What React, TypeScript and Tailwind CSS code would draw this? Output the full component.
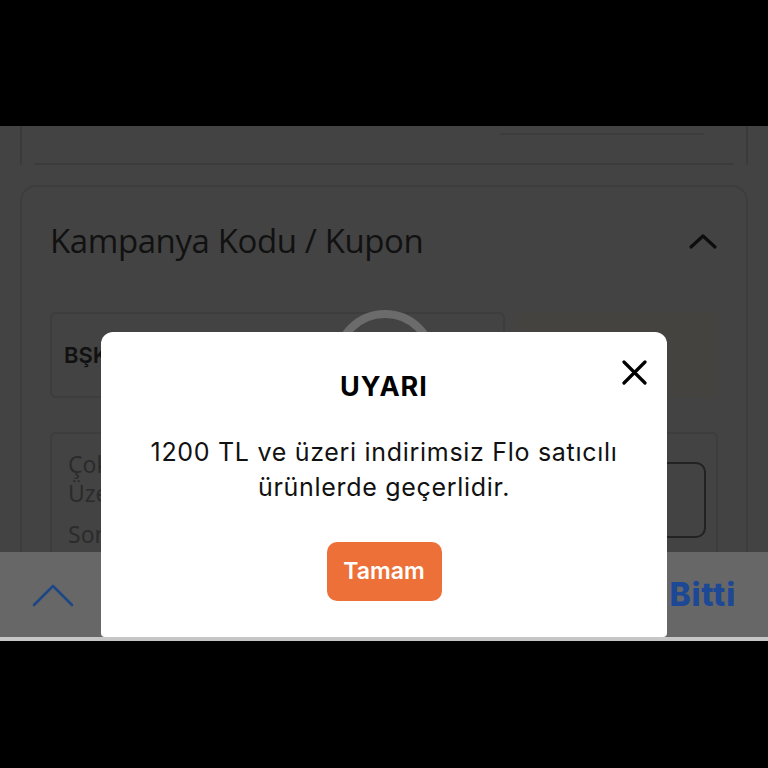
import React from "react";

export default function App() {
  return (
    <div className="w-[768px] h-[768px] bg-black flex flex-col overflow-hidden" style={{ fontFamily: "Inter, 'Noto Sans', sans-serif" }}>
      <div className="h-[126px] shrink-0" />
      <div className="relative h-[511px] shrink-0 bg-[#434343] flex flex-col overflow-hidden">
        <div className="flex-1 flex flex-col overflow-hidden">
          {/* previous card bottom */}
          <div className="mx-[20px] h-[39px] border-x-2 border-[#3b3b3b] flex flex-col justify-end px-[12px] relative">
            <div className="absolute right-[42px] top-[7px] w-[204px] h-[2px] bg-[#3c3c3c]" />
            <div className="h-[2px] bg-[#3b3b3b]" />
          </div>
          {/* campaign card */}
          <div className="mt-[20px] mx-[20px] flex-1 border-2 border-b-0 border-[#3d3d3d] rounded-t-[16px] px-[28px] flex flex-col">
            <div className="flex items-center justify-between pt-[33px] h-[75px]">
              <span className="text-[33px] leading-[38px] text-[#111]" style={{ fontFamily: "'Open Sans', sans-serif", letterSpacing: "-0.4px" }}>
                Kampanya Kodu / Kupon
              </span>
              <svg width="30" height="18" viewBox="0 0 30 18">
                <polyline points="3,15 15,4 27,15" fill="none" stroke="#0d0d0d" strokeWidth="3.2" strokeLinecap="round" strokeLinejoin="round" />
              </svg>
            </div>
            <div className="mt-[50px] flex gap-[10px] h-[86px]">
              <div className="w-[455px] border-2 border-[#3d3d3d] rounded-[6px] flex items-center pl-[12px]">
                <span className="text-[22px] font-semibold text-[#111]">BŞK</span>
              </div>
              <div className="flex-1 bg-[#45433f] rounded-[6px]" />
            </div>
            <div className="mt-[34px] flex-1 border-2 border-b-0 border-[#3d3d3d] rounded-t-[6px] flex pl-[16px] pr-[10px] pt-[16px]">
              <div className="w-[240px] flex flex-col text-[#2b2b2b] text-[23px]" style={{ fontFamily: "'Noto Sans', sans-serif" }}>
                <span className="leading-[29px]">Çok</span>
                <span className="leading-[29px]">Üzerinde</span>
                <span className="leading-[29px] mt-[12px]">Son</span>
              </div>
              <div className="flex-1 flex justify-end pt-[12px]">
                <div className="w-[300px] h-[76px] border-2 border-[#222] rounded-[10px]" />
              </div>
            </div>
          </div>
        </div>
        {/* toolbar */}
        <div className="h-[85px] shrink-0 bg-[#676767] flex items-center justify-between pl-[32px] pr-[32px]">
          <svg width="42" height="26" viewBox="0 0 42 26">
            <polyline points="2,23 21,4 40,23" fill="none" stroke="#1d4784" strokeWidth="2.6" strokeLinecap="round" strokeLinejoin="round" />
          </svg>
          <span className="text-[32px] font-extrabold text-[#1d4895] tracking-[0.8px]">Bitti</span>
        </div>
        {/* spinner */}
        <div className="absolute left-[333px] top-[184px] w-[104px] h-[104px] rounded-full border-[8px] border-[#6b6b6b]" />
        {/* modal */}
        <div className="absolute left-[101px] top-[206px] w-[566px] bottom-0 bg-white rounded-t-[12px] rounded-b-[4px] flex flex-col items-center">
          <button className="absolute right-[20px] top-[28px] w-[25px] h-[25px]">
            <svg width="25" height="25" viewBox="0 0 25 25">
              <path d="M2 2 L23 23 M23 2 L2 23" stroke="#000" strokeWidth="3.2" strokeLinecap="round" />
            </svg>
          </button>
          <div className="mt-[39px] text-[27px] leading-[32px] font-bold text-black tracking-[1px]">UYARI</div>
          <div className="mt-[32px] text-[25px] leading-[35px] text-[#111] text-center w-[520px] tracking-[0.7px]">
            1200 TL ve üzeri indirimsiz Flo satıcılı
            <br />
            ürünlerde geçerlidir.
          </div>
          <button className="mt-[37px] w-[115px] h-[59px] rounded-[10px] bg-[#ec7038] text-white text-[23px] font-semibold">
            Tamam
          </button>
        </div>
      </div>
      <div className="h-[4px] shrink-0 bg-[#c6c6c6]" />
      <div className="flex-1" />
    </div>
  );
}
